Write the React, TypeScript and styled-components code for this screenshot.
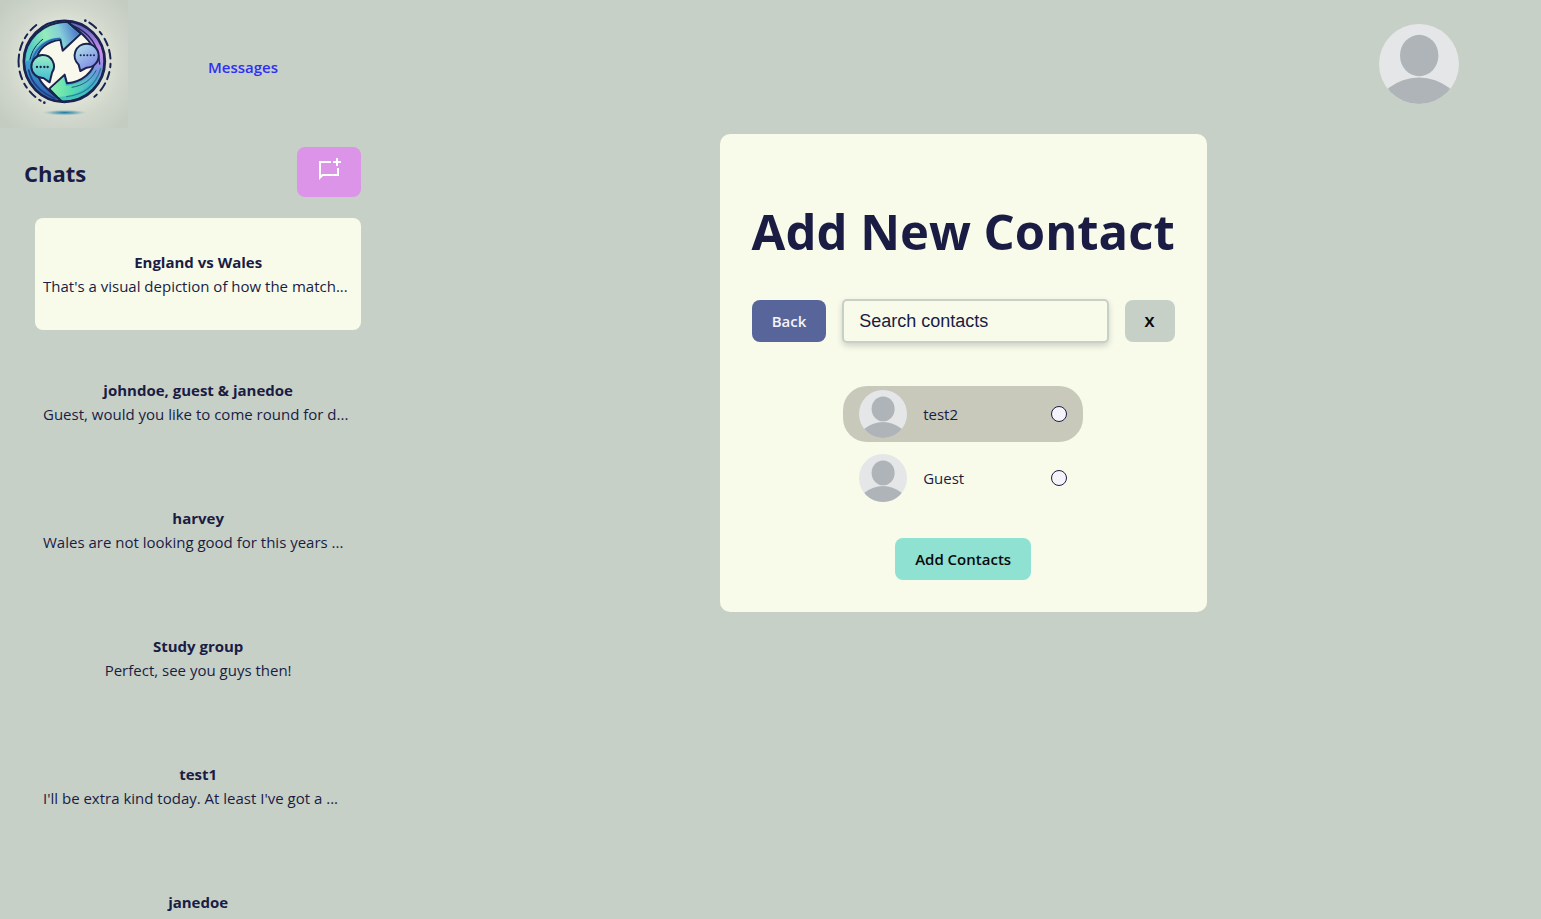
import React, { useState } from "react";
import styled, { createGlobalStyle } from "styled-components";

const navy = "#1a1c44";
const sage = "#c7d0c7";
const cream = "#f8fbea";

const GlobalStyle = createGlobalStyle`
  *, *::before, *::after { box-sizing: border-box; }
  body {
    margin: 0;
    background: ${sage};
    color: ${navy};
    font-family: "Segoe UI", "Open Sans", "Noto Sans", sans-serif;
    font-size: 15px;
    line-height: 24px;
  }
  h1, h2, h3, p, ul { margin: 0; padding: 0; }
  ul { list-style: none; }
`;

const Page = styled.div`
  display: flex;
  flex-direction: column;
  height: 100vh;
  overflow: hidden;
`;

const Header = styled.header`
  display: flex;
  align-items: center;
  flex: none;
  padding-right: 82px;
`;

const Nav = styled.nav`
  flex: 1;
  padding: 6px 80px 0;
`;

const NavLink = styled.a`
  color: #2f2ff5;
  font-weight: 600;
  text-decoration: none;
`;

const Body = styled.div`
  display: grid;
  grid-template-columns: 1fr 3fr;
  flex: 1;
  min-height: 0;
`;

const Sidebar = styled.aside`
  padding: 19px 24px 0;
  min-width: 0;
  overflow-y: auto;
  scrollbar-width: none;
`;

const SidebarHead = styled.div`
  display: flex;
  align-items: center;
  justify-content: space-between;
`;

const SidebarTitle = styled.h2`
  padding-top: 2px;
  font-size: 22px;
  line-height: 32px;
`;

const NewChatButton = styled.button`
  display: flex;
  width: 64px;
  height: 50px;
  padding: 10px 20px;
  border: 0;
  border-radius: 8px;
  background: #dc94e8;
  color: #fff;
  cursor: pointer;
`;

const ChatList = styled.ul`
  display: flex;
  flex-direction: column;
  gap: 16px;
  margin-top: 21px;
  padding-left: 11px;
`;

const ChatItem = styled.li<{ $active?: boolean }>`
  display: flex;
  flex-direction: column;
  justify-content: center;
  height: 112px;
  flex: none;
  padding: 0 8px;
  border-radius: 8px;
  background: ${(p) => (p.$active ? cream : "transparent")};
`;

const ChatName = styled.h3`
  font-size: 15px;
  line-height: 24px;
  text-align: center;
`;

const ChatPreview = styled.p<{ $cut?: boolean }>`
  text-align: ${(p) => (p.$cut ? "left" : "center")};
  white-space: nowrap;
`;

const Main = styled.main`
  display: flex;
  justify-content: center;
  align-items: flex-start;
  padding-top: 6px;
`;

const Dialog = styled.form`
  display: flex;
  flex-direction: column;
  align-items: center;
  width: 487px;
  padding: 65px 32px 32px;
  border-radius: 10px;
  background: ${cream};
`;

const DialogTitle = styled.h1`
  font-size: 49px;
  line-height: 64px;
  white-space: nowrap;
`;

const SearchRow = styled.div`
  display: flex;
  align-items: center;
  gap: 16px;
  width: 100%;
  margin-top: 36px;
`;

const Button = styled.button<{ $bg: string; $fg?: string; $bold?: boolean }>`
  height: 42px;
  padding: 0 20px;
  border: 0;
  border-radius: 8px;
  background: ${(p) => p.$bg};
  color: ${(p) => p.$fg ?? "#0a0a0a"};
  font: inherit;
  font-weight: ${(p) => (p.$bold ? 700 : 600)};
  cursor: pointer;
`;

const SearchInput = styled.input`
  flex: 1;
  min-width: 0;
  height: 44px;
  padding: 0 15px;
  border: 2px solid ${sage};
  border-radius: 5px;
  background: ${cream};
  box-shadow: 0 3px 6px rgba(0, 0, 0, 0.16);
  color: ${navy};
  font-family: "Liberation Sans", Arial, sans-serif;
  font-size: 18px;
  &::placeholder { color: ${navy}; opacity: 1; }
`;

const ContactList = styled.ul`
  display: flex;
  flex-direction: column;
  gap: 8px;
  width: 240px;
  margin: 43px 0 32px;
`;

const Contact = styled.label<{ $highlight?: boolean }>`
  display: flex;
  align-items: center;
  gap: 16px;
  height: 56px;
  padding: 0 16px;
  border-radius: 24px;
  background: ${(p) => (p.$highlight ? "#c8c9bb" : "transparent")};
  cursor: pointer;
`;

const ContactName = styled.span`
  flex: 1;
`;

const Tick = styled.input`
  appearance: none;
  width: 16px;
  height: 16px;
  margin: 0;
  border: 1px solid ${navy};
  border-radius: 50%;
  background: #f4f4fa;
  &:checked { background: #57659b; }
`;

const Avatar = ({ size }: { size: number }) => (
  <svg width={size} height={size} viewBox="0 0 80 80" role="img" aria-label="Profile picture">
    <defs>
      <clipPath id={`avatar-${size}`}>
        <circle cx="40" cy="40" r="40" />
      </clipPath>
    </defs>
    <g clipPath={`url(#avatar-${size})`}>
      <rect width="80" height="80" fill="#e4e6e8" />
      <ellipse cx="40.2" cy="31.5" rx="19.2" ry="20.7" fill="#aeb4b8" />
      <ellipse cx="40" cy="88" rx="42" ry="34.5" fill="#aeb4b8" />
    </g>
  </svg>
);

const NewChatIcon = () => (
  <svg width="24" height="24" viewBox="0 0 24 24" fill="currentColor" aria-hidden="true">
    <path d="M14 4H2v19l4-4h16v-8h-2v6H5.200L4 18.200V6h10V4Z" />
    <path d="M19 1h2v3h3v2h-3v3h-2V6h-3V4h3V1Z" />
  </svg>
);

const Logo = () => (
  <svg width="128" height="128" viewBox="0 0 384 384" role="img" aria-label="Logo">
    <defs>
      <radialGradient id="glow" gradientUnits="userSpaceOnUse" cx="193" cy="188" r="250">
        <stop offset="0.45" stopColor="#e0e4d8" />
        <stop offset="0.7" stopColor="#d0d6cb" />
        <stop offset="1" stopColor="#c4ccc1" />
      </radialGradient>
      <linearGradient id="upper" gradientUnits="userSpaceOnUse" x1="96" y1="150" x2="236" y2="100">
        <stop offset="0" stopColor="#58cfc4" />
        <stop offset="0.35" stopColor="#93ecba" />
        <stop offset="0.65" stopColor="#86cfd8" />
        <stop offset="1" stopColor="#4a74cc" />
      </linearGradient>
      <linearGradient id="left" x1="0" y1="0" x2="0" y2="1">
        <stop offset="0" stopColor="#6adcc0" />
        <stop offset="0.5" stopColor="#3f9fd0" />
        <stop offset="1" stopColor="#2a5cb0" />
      </linearGradient>
      <linearGradient id="right" x1="0" y1="0" x2="0" y2="1">
        <stop offset="0" stopColor="#5a62b8" />
        <stop offset="0.38" stopColor="#cf8fec" />
        <stop offset="0.62" stopColor="#7a8fe0" />
        <stop offset="0.82" stopColor="#3cb8c4" />
        <stop offset="1" stopColor="#46cdb0" />
      </linearGradient>
      <linearGradient id="lower" x1="0" y1="0" x2="1" y2="0">
        <stop offset="0" stopColor="#8cf0ac" />
        <stop offset="0.5" stopColor="#52dab0" />
        <stop offset="1" stopColor="#5aa4dc" />
      </linearGradient>
      <linearGradient id="bubbleLeft" x1="0" y1="0" x2="0" y2="1">
        <stop offset="0" stopColor="#9cf0c4" />
        <stop offset="1" stopColor="#3cb8d4" />
      </linearGradient>
      <linearGradient id="bubbleRight" x1="0" y1="0" x2="0.6" y2="1">
        <stop offset="0" stopColor="#b4eaec" />
        <stop offset="1" stopColor="#7f88e4" />
      </linearGradient>
      <radialGradient id="shade">
        <stop offset="0" stopColor="#1876a4" />
        <stop offset="0.5" stopColor="#5aa0b4" stopOpacity="0.7" />
        <stop offset="1" stopColor="#b4ccc4" stopOpacity="0" />
      </radialGradient>
    </defs>
    <rect width="384" height="384" fill="url(#glow)" />
    <ellipse cx="194" cy="338" rx="70" ry="9" fill="url(#shade)" />
    <circle cx="193" cy="184" r="122" fill="#f8f9ec" />

    <g strokeLinejoin="round" strokeLinecap="round" stroke="#1b2350">
      {/* right-hand sweep and lower arrow */}
      <path
        d="M200 64C268 70 313 120 313 184C313 250 262 305 185 305L148 266L194 224L201 250C245 246 282 218 286 176C286 138 260 108 200 64Z"
        fill="url(#right)"
        strokeWidth="6"
      />
      <path
        d="M152 266L191 231L198 257C242 254 274 232 290 198C286 252 246 286 176 291Z"
        fill="url(#lower)"
        stroke="none"
      />
      <path d="M200 290C252 284 288 254 302 206" fill="none" stroke="#24809e" strokeWidth="4" />
      <path d="M216 262C250 256 274 240 288 212" fill="none" stroke="#1f5f86" strokeWidth="3" />
      <path d="M216 76C272 98 296 140 299 192" fill="none" strokeWidth="4" />

      {/* left-hand sweep and upper arrow */}
      <path
        d="M186 304C124 304 72 248 72 184C74 120 126 66 202 66L242 101L188 152L181 119C142 124 116 146 108 180C100 240 142 268 186 304Z"
        fill="url(#left)"
        strokeWidth="6"
      />
      <path
        d="M78 178C84 112 138 71 200 70L236 101L190 144L184 112C144 113 110 130 92 172C86 184 78 188 78 178Z"
        fill="url(#upper)"
        stroke="none"
      />
      <path d="M90 178C96 152 108 134 128 118" fill="none" strokeWidth="3" />
      <path d="M98 178C110 142 140 118 178 116" fill="none" stroke="#2a68b0" strokeWidth="5" />
      <path d="M86 210C94 250 126 280 164 295" fill="none" stroke="#1f3f80" strokeWidth="5" />

      <circle cx="193" cy="184" r="122" fill="none" strokeWidth="7" />

      <path
        d="M127 165A34 34 0 0 1 156 218L149 247L130 234A34 34 0 1 1 127 165Z"
        fill="url(#bubbleLeft)"
        strokeWidth="6"
      />
      <path
        d="M260 131A36 36 0 1 1 260 203L241 213L236 194A36 36 0 0 1 260 131Z"
        fill="url(#bubbleRight)"
        strokeWidth="6"
      />
      <path d="M111 201h0M122 201h0M133 201h0M143 201h0" strokeWidth="7" />
      <path d="M242 166h0M252 166h0M262 166h0M272 166h0M282 166h0" strokeWidth="6" />

      {/* broken outer ring */}
      <path
        d="M109 75A138 138 0 0 0 122 302"
        fill="none"
        strokeWidth="6"
        strokeDasharray="24 15 14 14 24 14 36 15"
      />
      <path d="M133 308h0M256 62h0" strokeWidth="8" />
      <path
        d="M268 68A139 139 0 0 1 280 293"
        fill="none"
        strokeWidth="6"
        strokeDasharray="26 16 10 15 22 14"
      />
    </g>
  </svg>
);

const chats = [
  { name: "England vs Wales", preview: "That's a visual depiction of how the match...", cut: true },
  { name: "johndoe, guest & janedoe", preview: "Guest, would you like to come round for d...", cut: true },
  { name: "harvey", preview: "Wales are not looking good for this years ...", cut: true },
  { name: "Study group", preview: "Perfect, see you guys then!", cut: false },
  { name: "test1", preview: "I'll be extra kind today. At least I've got a ...", cut: true },
  { name: "janedoe", preview: "", cut: false },
];

const contacts = ["test2", "Guest"];

export default function App() {
  const [query, setQuery] = useState("");

  return (
    <Page>
      <GlobalStyle />
      <Header>
        <Logo />
        <Nav>
          <NavLink href="#messages">Messages</NavLink>
        </Nav>
        <Avatar size={80} />
      </Header>
      <Body>
        <Sidebar>
          <SidebarHead>
            <SidebarTitle>Chats</SidebarTitle>
            <NewChatButton type="button" aria-label="New chat">
              <NewChatIcon />
            </NewChatButton>
          </SidebarHead>
          <ChatList>
            {chats.map((chat, i) => (
              <ChatItem key={chat.name} $active={i === 0}>
                <ChatName>{chat.name}</ChatName>
                <ChatPreview $cut={chat.cut}>{chat.preview || "\u00a0"}</ChatPreview>
              </ChatItem>
            ))}
          </ChatList>
        </Sidebar>
        <Main>
          <Dialog onSubmit={(e) => e.preventDefault()}>
            <DialogTitle>Add New Contact</DialogTitle>
            <SearchRow>
              <Button type="button" $bg="#57659b" $fg="#f4f4fa">
                Back
              </Button>
              <SearchInput
                type="text"
                aria-label="Search contacts"
                placeholder="Search contacts"
                value={query}
                onChange={(e) => setQuery(e.target.value)}
              />
              <Button type="button" $bg={sage} $bold>
                X
              </Button>
            </SearchRow>
            <ContactList>
              {contacts.map((name, i) => (
                <li key={name}>
                  <Contact $highlight={i === 0}>
                    <Avatar size={48} />
                    <ContactName>{name}</ContactName>
                    <Tick type="checkbox" />
                  </Contact>
                </li>
              ))}
            </ContactList>
            <Button type="submit" $bg="#8fe1d2">
              Add Contacts
            </Button>
          </Dialog>
        </Main>
      </Body>
    </Page>
  );
}
